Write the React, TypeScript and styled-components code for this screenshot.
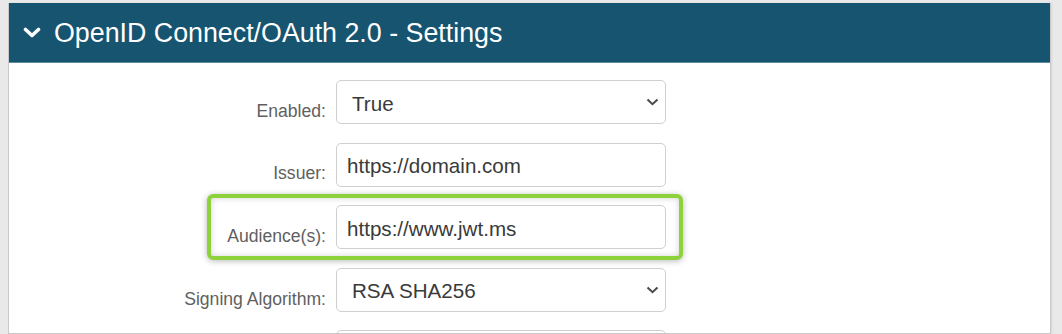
import React from "react"
import styled, { createGlobalStyle } from "styled-components"

const GlobalStyle = createGlobalStyle`
  html, body {
    margin: 0;
    padding: 0;
    background: #e9e9e9;
    overflow: hidden;
  }
  body {
    font-family: "Liberation Sans", Arial, sans-serif;
  }
`

const Page = styled.div`
  padding: 3px 11px 0 8px;
  height: 334px;
  box-sizing: border-box;
`

const Panel = styled.section`
  background: #fff;
  border: 1px solid #c9c9c9;
  border-top: none;
  height: 100%;
  box-sizing: border-box;
  overflow: hidden;
  box-shadow: 1px 0 2px rgba(0, 0, 0, 0.08);
`

const Header = styled.header`
  display: flex;
  align-items: center;
  gap: 13px;
  height: 60px;
  padding-left: 14px;
  background: #165470;
  color: #fff;
  border-bottom: 1px solid #5d8aa0;
  box-sizing: border-box;
`

const Title = styled.h2`
  margin: 0;
  font-size: 26.8px;
  font-weight: 400;
  padding-top: 2px;
`

const Form = styled.div`
  display: flex;
  flex-direction: column;
  align-items: flex-start;
  gap: 18.6px;
  padding-top: 17px;
`

const Row = styled.div<{ $highlight?: boolean }>`
  position: relative;
  display: grid;
  grid-template-columns: 317px 330px;
  column-gap: 10px;
  align-items: end;

  ${({ $highlight }) =>
    $highlight &&
    `
    &::before {
      content: "";
      position: absolute;
      left: 198px;
      right: -17px;
      top: -11px;
      bottom: -11px;
      border: 4px solid #8dd13b;
      border-radius: 6px;
      box-shadow: 0 1px 6px rgba(0, 0, 0, 0.28), inset 0 0 6px rgba(0, 0, 0, 0.18);
      pointer-events: none;
    }
  `}
`

const Label = styled.label`
  text-align: right;
  font-size: 17.6px;
  color: #5f5f5f;
  padding-bottom: 2px;
  line-height: 1.2;
`

const Field = styled.div`
  position: relative;
  height: 44px;
`

const baseControl = `
  width: 100%;
  height: 100%;
  box-sizing: border-box;
  border: 1px solid #cfcfcf;
  border-radius: 5px;
  background: #fff;
  font-family: "Liberation Sans", Arial, sans-serif;
  font-size: 20.6px;
  color: #3a3a3a;
  outline: none;
  margin: 0;
`

const TextInput = styled.input`
  ${baseControl}
  padding: 3px 10px 0 10px;
`

const Select = styled.select`
  ${baseControl}
  appearance: none;
  -webkit-appearance: none;
  padding: 2px 30px 0 15px;
`

const Caret = styled.svg`
  position: absolute;
  right: 7px;
  top: 18px;
  pointer-events: none;
`

const SelectField = ({ value, options }: { value: string; options: string[] }) => (
  <Field>
    <Select defaultValue={value}>
      {options.map((o) => (
        <option key={o}>{o}</option>
      ))}
    </Select>
    <Caret width="13" height="8" viewBox="0 0 13 8">
      <path d="M1.5 1.5 L6.5 6.2 L11.5 1.5" fill="none" stroke="#4a4a4a" strokeWidth="2" />
    </Caret>
  </Field>
)

const InputField = ({ value }: { value: string }) => (
  <Field>
    <TextInput defaultValue={value} />
  </Field>
)

export default function App() {
  return (
    <>
      <GlobalStyle />
      <Page>
        <Panel>
          <Header>
            <svg width="18" height="11" viewBox="0 0 18 11">
              <path
                d="M2.5 2.5 L9 8.5 L15.5 2.5"
                fill="none"
                stroke="#fff"
                strokeWidth="3.6"
                strokeLinecap="round"
                strokeLinejoin="round"
              />
            </svg>
            <Title>OpenID Connect/OAuth 2.0 - Settings</Title>
          </Header>
          <Form>
            <Row>
              <Label>Enabled:</Label>
              <SelectField value="True" options={["True", "False"]} />
            </Row>
            <Row>
              <Label>Issuer:</Label>
              <InputField value="https://domain.com" />
            </Row>
            <Row $highlight>
              <Label>Audience(s):</Label>
              <InputField value="https://www.jwt.ms" />
            </Row>
            <Row>
              <Label>Signing Algorithm:</Label>
              <SelectField value="RSA SHA256" options={["RSA SHA256", "HMAC SHA256"]} />
            </Row>
            <Row>
              <Label />
              <InputField value="" />
            </Row>
          </Form>
        </Panel>
      </Page>
    </>
  )
}
